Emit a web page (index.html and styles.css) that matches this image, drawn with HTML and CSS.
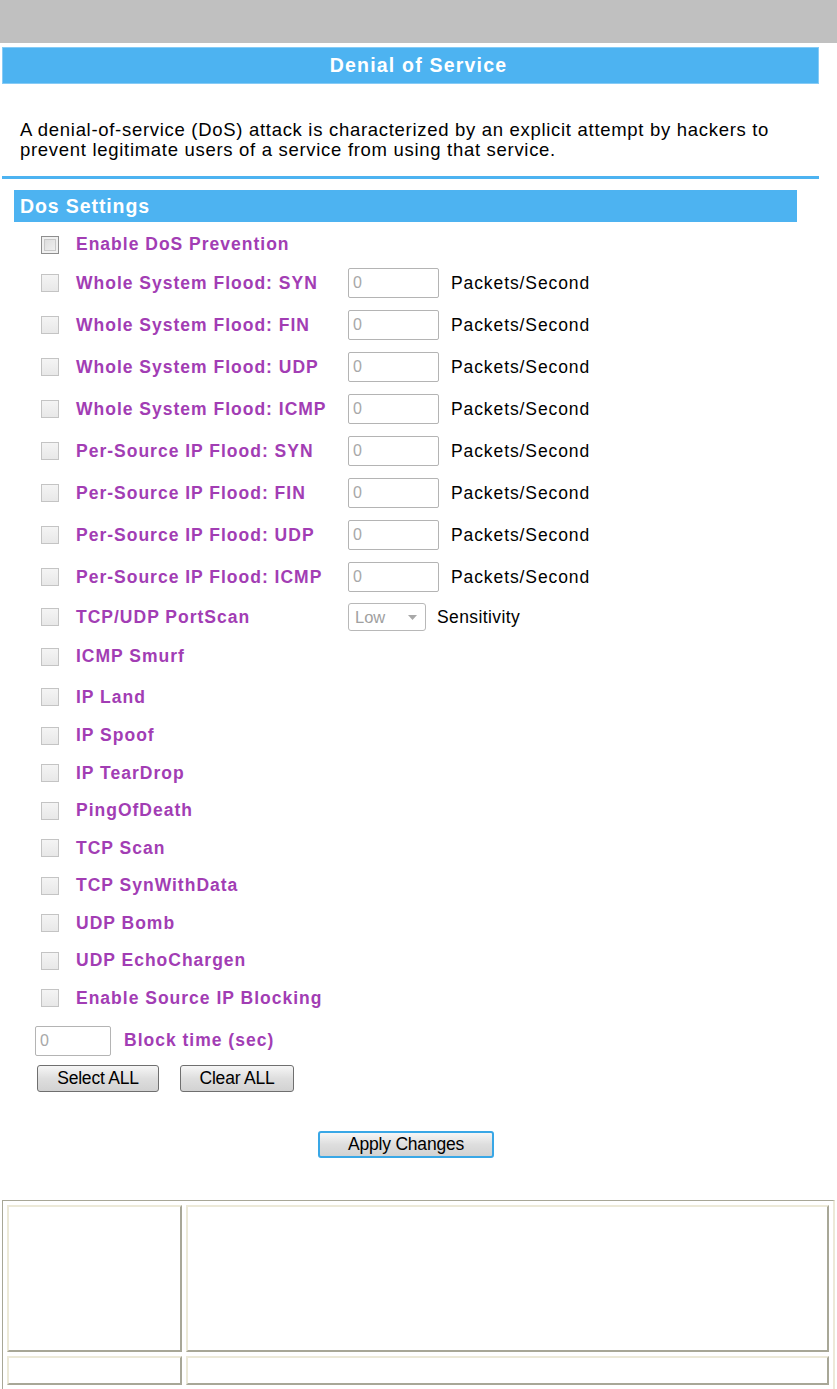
FILE: index.html
```html
<!DOCTYPE html>
<html lang="en">
<head>
    <meta charset="UTF-8">
    <title>Denial of Service</title>
    <link rel="stylesheet" href="styles.css">
</head>
<body>
    <div class="topbar"></div>
    <div class="page">
        <div class="title">Denial of Service</div>
        <p class="intro">A denial-of-service (DoS) attack is characterized by an explicit attempt by hackers to<br>prevent legitimate users of a service from using that service.</p>
        <div class="rule"></div>

        <form class="dos">
            <div class="section">Dos Settings</div>

            <div class="row r-first"><input type="checkbox" class="chk main"><span class="lbl">Enable DoS Prevention</span></div>

            <div class="row r-input"><input type="checkbox" class="chk"><span class="lbl w">Whole System Flood: SYN</span><input class="num" value="0"><span class="unit">Packets/Second</span></div>
            <div class="row r-input"><input type="checkbox" class="chk"><span class="lbl w">Whole System Flood: FIN</span><input class="num" value="0"><span class="unit">Packets/Second</span></div>
            <div class="row r-input"><input type="checkbox" class="chk"><span class="lbl w">Whole System Flood: UDP</span><input class="num" value="0"><span class="unit">Packets/Second</span></div>
            <div class="row r-input"><input type="checkbox" class="chk"><span class="lbl w">Whole System Flood: ICMP</span><input class="num" value="0"><span class="unit">Packets/Second</span></div>
            <div class="row r-input"><input type="checkbox" class="chk"><span class="lbl w">Per-Source IP Flood: SYN</span><input class="num" value="0"><span class="unit">Packets/Second</span></div>
            <div class="row r-input"><input type="checkbox" class="chk"><span class="lbl w">Per-Source IP Flood: FIN</span><input class="num" value="0"><span class="unit">Packets/Second</span></div>
            <div class="row r-input"><input type="checkbox" class="chk"><span class="lbl w">Per-Source IP Flood: UDP</span><input class="num" value="0"><span class="unit">Packets/Second</span></div>
            <div class="row r-input"><input type="checkbox" class="chk"><span class="lbl w">Per-Source IP Flood: ICMP</span><input class="num" value="0"><span class="unit">Packets/Second</span></div>

            <div class="row r-scan"><input type="checkbox" class="chk"><span class="lbl w">TCP/UDP PortScan</span>
                <span class="sel">Low<svg width="9" height="5" viewBox="0 0 9 5"><path d="M0 0h9L4.5 5z" fill="#a8a8a8"/></svg></span>
                <span class="unit u-sens">Sensitivity</span>
            </div>

            <div class="row r-smurf"><input type="checkbox" class="chk"><span class="lbl">ICMP Smurf</span></div>
            <div class="row r-land"><input type="checkbox" class="chk"><span class="lbl">IP Land</span></div>
            <div class="row"><input type="checkbox" class="chk"><span class="lbl">IP Spoof</span></div>
            <div class="row"><input type="checkbox" class="chk"><span class="lbl">IP TearDrop</span></div>
            <div class="row"><input type="checkbox" class="chk"><span class="lbl">PingOfDeath</span></div>
            <div class="row"><input type="checkbox" class="chk"><span class="lbl">TCP Scan</span></div>
            <div class="row"><input type="checkbox" class="chk"><span class="lbl">TCP SynWithData</span></div>
            <div class="row"><input type="checkbox" class="chk"><span class="lbl">UDP Bomb</span></div>
            <div class="row"><input type="checkbox" class="chk"><span class="lbl">UDP EchoChargen</span></div>
            <div class="row"><input type="checkbox" class="chk"><span class="lbl">Enable Source IP Blocking</span></div>

            <div class="row r-block"><input class="num short" value="0"><span class="lbl">Block time (sec)</span></div>

            <div class="btns">
                <button type="button" class="btn b-sel">Select ALL</button>
                <button type="button" class="btn b-clr">Clear ALL</button>
            </div>

            <div class="apply">
                <button type="button" class="btn b-apply">Apply Changes</button>
            </div>
        </form>
    </div>

    <table class="frame">
        <tr class="tall"><td class="c1"></td><td class="c2"></td></tr>
        <tr class="short"><td class="c1"></td><td class="c2"></td></tr>
    </table>
</body>
</html>
```

FILE: styles.css
```css
body {
    margin: 0;
    font-family: "Liberation Sans", Arial, sans-serif;
    color: #000;
    background: #fff;
}
.topbar {
    height: 43px;
    background: #c0c0c0;
}
.page {
    width: 817px;
    margin-left: 2px;
}
.title {
    margin-top: 4px;
    height: 35px;
    line-height: 35px;
    padding-left: 16px;
    background: #4db3f1;
    border: 1px solid #86cbf6;
    color: #fff;
    font-weight: bold;
    font-size: 19.5px;
    letter-spacing: 1.2px;
    text-align: center;
}
.intro {
    margin: 36px 0 0 18px;
    font-size: 18.5px;
    line-height: 20px;
    letter-spacing: 0.7px;
}
.rule {
    margin-top: 16px;
    height: 3px;
    background: #4db3f1;
}
.section {
    margin: 11px 0 0 12px;
    width: 783px;
    height: 32px;
    line-height: 32px;
    background: #4db3f1;
    color: #fff;
    font-weight: bold;
    font-size: 19.5px;
    letter-spacing: 0.9px;
    padding-left: 6px;
    box-sizing: border-box;
}
.row {
    display: flex;
    align-items: center;
    height: 37.5px;
    padding-left: 39px;
}
.r-first {
    box-sizing: border-box;
    height: 43px;
    padding-top: 2px;
    margin-bottom: -3px;
}
.r-input { height: 42px; }
.r-scan { height: 38px; }
.r-smurf { height: 41px; }
.r-land { height: 40px; }
.r-block {
    height: 43px;
    padding: 2px 0 0 33px;
}
.r-block .lbl {
    margin-left: 13px;
}
.chk {
    appearance: none;
    -webkit-appearance: none;
    margin: 0;
    width: 18px;
    height: 18px;
    border: 1px solid #c4c4c4;
    background: linear-gradient(#f4f4f4, #e8e8e8);
    box-sizing: border-box;
}
.chk.main {
    border-color: #8e8e8e;
    box-shadow: inset 0 0 0 2px #f0f0f0, inset 0 0 0 3px #c8c8c8;
    background: linear-gradient(135deg, #d8d8d8, #f4f4f4);
}
.lbl {
    margin-left: 17px;
    color: #a23db4;
    font-weight: bold;
    font-size: 17.5px;
    letter-spacing: 1px;
}
.lbl.w {
    width: 272px;
}
.num {
    width: 91px;
    height: 30px;
    box-sizing: border-box;
    border: 1px solid #b4b4b4;
    border-radius: 2px;
    padding: 0 4px;
    font-family: "Liberation Sans", Arial, sans-serif;
    font-size: 16px;
    color: #a8a8a8;
    outline: none;
}
.num.short {
    width: 76px;
}
.unit {
    margin-left: 12px;
    font-size: 17.5px;
    letter-spacing: 0.9px;
}
.sel {
    display: flex;
    align-items: center;
    justify-content: space-between;
    width: 78px;
    height: 28px;
    box-sizing: border-box;
    border: 1px solid #b8b8b8;
    border-radius: 3px;
    padding: 0 8px 0 6px;
    font-size: 16.5px;
    color: #a0a0a0;
}
.u-sens {
    margin-left: 11px;
    letter-spacing: 0.4px;
}
.btns {
    display: flex;
    gap: 21px;
    padding: 3px 0 0 35px;
}
.btn {
    height: 27px;
    padding: 0;
    border: 1px solid #6f6f6f;
    border-radius: 3px;
    background: linear-gradient(#f6f6f6, #dedede 50%, #d2d2d2);
    font-family: "Liberation Sans", Arial, sans-serif;
    font-size: 17.5px;
    letter-spacing: -0.2px;
    color: #000;
}
.b-sel { width: 122px; }
.b-clr { width: 114px; }
.apply {
    padding: 39px 0 0 316px;
}
.b-apply {
    width: 176px;
    border: 2px solid #39a7e6;
}
.frame {
    margin: 42px 0 0 2px;
    width: 833px;
    border-collapse: separate;
    border-spacing: 4px;
    border-style: solid;
    border-width: 1px 2px 2px 1px;
    border-color: #a8a797 #ece9d8 #ece9d8 #a8a797;
}
.frame td {
    padding: 0;
    border-style: solid;
    border-width: 2px;
    border-color: #ece9d8 #a8a797 #a8a797 #ece9d8;
}
.c1 { width: 171px; }
.tall td { height: 143px; }
.short td { height: 25px; }
```
